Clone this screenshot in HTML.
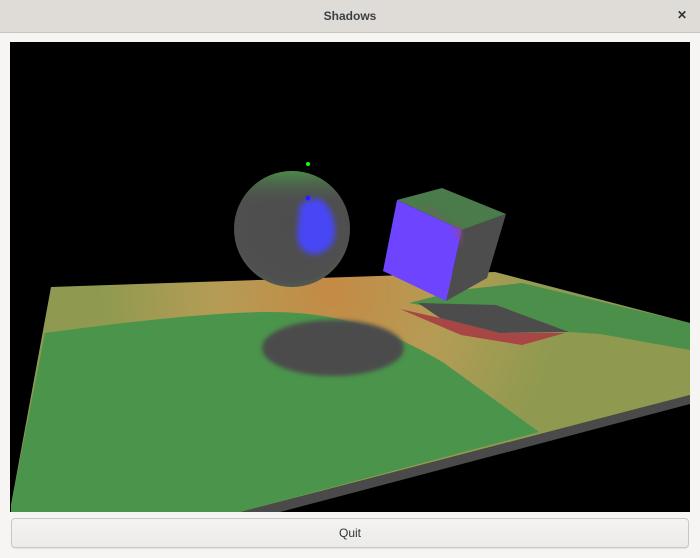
<!DOCTYPE html>
<html><head><style>
html,body{margin:0;padding:0;width:700px;height:558px;overflow:hidden;background:#f6f5f4;font-family:"Liberation Sans",sans-serif;}
.title{position:absolute;left:0;top:0;width:700px;height:32px;background:#dfdcd8;border-bottom:1px solid #c8c4bf;}
.title span{position:absolute;left:0;width:700px;top:9px;text-align:center;font-size:12px;font-weight:bold;color:#3a3f41;}
.x{position:absolute;right:13px;top:8px;font-size:12px;font-weight:bold;color:#2e3436;}
.btn{position:absolute;left:11px;top:518px;width:676px;height:28px;border:1px solid #cdc7c2;border-radius:4px;background:linear-gradient(#f4f3f2,#ecebe9);box-shadow:0 1px 1px rgba(0,0,0,0.08);text-align:center;line-height:28px;font-size:12px;color:#2e3436;}
svg{position:absolute;left:10px;top:42px;}
</style></head><body>
<div class="title"><span>Shadows</span><div class="x">✕</div></div>
<svg width="680" height="470" viewBox="10 42 680 470">
<defs>
<radialGradient id="glow" cx="330" cy="290" r="230" gradientUnits="userSpaceOnUse">
<stop offset="0" stop-color="#c48a45"/><stop offset="0.5" stop-color="#b59c55"/><stop offset="1" stop-color="#8f9a50"/>
</radialGradient>
<radialGradient id="sph" cx="0.5" cy="0.45" r="0.55">
<stop offset="0" stop-color="#4d4d4d"/><stop offset="0.9" stop-color="#4f4f4f"/><stop offset="1" stop-color="#4f5a4f"/>
</radialGradient>
<radialGradient id="blue" cx="0.45" cy="0.45" r="0.5">
<stop offset="0" stop-color="#4848ff"/><stop offset="0.65" stop-color="#4a48f0"/><stop offset="1" stop-color="#4d4d4d" stop-opacity="0"/>
</radialGradient>
<linearGradient id="sphtop" x1="0" y1="0" x2="0" y2="1">
<stop offset="0" stop-color="#4a8a48"/><stop offset="0.3" stop-color="#4d4d4d" stop-opacity="0"/>
</linearGradient>
<filter id="bl"><feGaussianBlur stdDeviation="2"/></filter>
<filter id="bl3"><feGaussianBlur stdDeviation="3"/></filter>
</defs>
<rect x="10" y="42" width="680" height="470" fill="#000"/>
<polygon points="690,395 240,512 280,512 690,404" fill="#4a4a4a"/>
<polygon points="51,287 495,272 690,323 690,395 240,512 11,512 11,505" fill="url(#glow)"/>
<polygon points="409,303 460,290 522,283 690,323 690,350 600,334 569,332" fill="#4b8f4a"/>
<path d="M45,333 C140,320 220,312 270,312 C330,312 380,325 444,363 L539,432 L240,512 L11,512 L11,505 Z" fill="#4b944b"/>
<ellipse cx="333" cy="348" rx="71" ry="28" fill="#4c4c4c" filter="url(#bl)"/>
<polygon points="400,309 461,335 522,345 565,333 500,333 440,318" fill="#a84545"/>
<polygon points="418,303 496,305 569,332 500,333 440,318" fill="#4c4c4c"/>
<circle cx="292" cy="229" r="58" fill="url(#sph)"/>
<circle cx="292" cy="229" r="58" fill="url(#sphtop)"/>
<g filter="url(#bl3)"><path d="M300,205 Q310,196 322,200 Q338,215 334,240 Q326,256 310,254 Q298,250 297,235 Z" fill="#4646f5"/></g>
<circle cx="308" cy="164" r="2" fill="#1f1"/>
<circle cx="308" cy="198" r="2.5" fill="#22f"/>
<polygon points="462,230 506,214 487,278 446,301" fill="#4d4d4d"/>
<polygon points="397,200 442,188 506,214 462,230" fill="#4b7a4b"/>
<polygon points="397,200 462,230 446,301 383,271" fill="#6e44ff"/>
<path d="M420,205 Q455,215 462,250 L462,230 Z" fill="#9a4a70" opacity="0.6" filter="url(#bl)"/>
</svg>
<div class="btn">Quit</div>
</body></html>
